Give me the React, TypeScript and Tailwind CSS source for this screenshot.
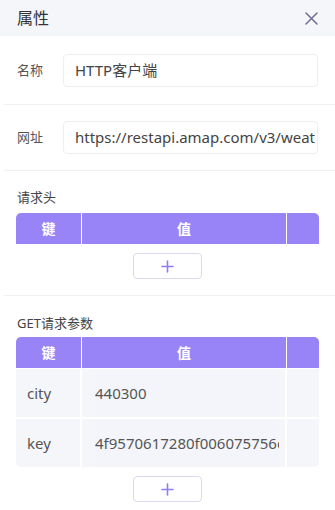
import React from 'react';

const font = { fontFamily: '"Noto Sans", "Noto Sans CJK SC", sans-serif' };

const TableHead = () => (
  <div className="flex h-[31px] rounded-t-[5px] overflow-hidden bg-[#9884f6] text-white text-[14px] font-bold">
    <div className="w-[66px] flex items-center justify-center border-r border-white">键</div>
    <div className="w-[205px] flex items-center justify-center border-r border-white">值</div>
    <div className="flex-1" />
  </div>
);

const AddButton = () => (
  <div className="flex justify-center">
    <button className="w-[69px] h-[26px] rounded-[4px] border border-[#dcd8f0] bg-white flex items-center justify-center">
      <svg width="13" height="13" viewBox="0 0 13 13">
        <path d="M6.5 1v11M1 6.5h11" stroke="#8f7cf3" strokeWidth="1.6" strokeLinecap="round" />
      </svg>
    </button>
  </div>
);

const App = () => {
  const params = [
    { key: 'city', value: '440300' },
    { key: 'key', value: '4f9570617280f006075756c2b3a1' },
  ];

  return (
    <div className="w-[335px] h-[510px] bg-white overflow-hidden text-[#333]" style={font}>
      {/* Header */}
      <div className="h-[36px] bg-[#f5f6fa] flex items-center justify-between pl-[17px] pr-[17px]">
        <span className="text-[16px] text-[#333]">属性</span>
        <svg width="13" height="13" viewBox="0 0 13 13">
          <path d="M1 1l11 11M12 1L1 12" stroke="#6f6d92" strokeWidth="1.5" strokeLinecap="round" />
        </svg>
      </div>

      {/* Name */}
      <div className="flex items-center pl-[17px] pr-[17px] pt-[18px] pb-[17px]">
        <span className="w-[46px] text-[13px] text-[#555]">名称</span>
        <div className="flex-1 h-[33px] border border-[#eceef2] rounded-[4px] flex items-center px-[11px] text-[15px] text-[#444] overflow-hidden whitespace-nowrap">
          HTTP客户端
        </div>
      </div>
      <div className="ml-[4px] h-px bg-[#eef0f4]" />

      {/* URL */}
      <div className="flex items-center pl-[17px] pr-[17px] pt-[16px] pb-[16px]">
        <span className="w-[46px] text-[13px] text-[#555]">网址</span>
        <div className="flex-1 h-[33px] border border-[#eceef2] rounded-[4px] flex items-center pl-[11px] pr-[2px] text-[15px] text-[#444] overflow-hidden whitespace-nowrap">
          <span className="overflow-hidden">https://restapi.amap.com/v3/weather/weatherInfo</span>
        </div>
      </div>
      <div className="ml-[4px] h-px bg-[#eef0f4]" />

      {/* Headers */}
      <div className="pl-[16px] pr-[16px] pt-[17px] pb-[16px]">
        <div className="text-[13px] text-[#444] pl-px h-[18px] leading-[18px] mb-[7px]">请求头</div>
        <TableHead />
        <div className="mt-[9px]">
          <AddButton />
        </div>
      </div>
      <div className="ml-[4px] h-px bg-[#eef0f4]" />

      {/* GET params */}
      <div className="pl-[16px] pr-[16px] pt-[18px]">
        <div className="text-[13px] text-[#444] pl-px h-[18px] leading-[18px] mb-[5px]">GET请求参数</div>
        <TableHead />
        <div className="flex flex-col gap-[2px] mt-px rounded-b-[5px] overflow-hidden">
          {params.map((p) => (
            <div key={p.key} className="flex h-[48px] text-[15px] text-[#555]">
              <div className="w-[66px] bg-[#f5f6fa] border-r-2 border-white flex items-center pl-[11px]">{p.key}</div>
              <div className="w-[205px] bg-[#f5f6fa] border-r-2 border-white flex items-center pl-[13px] pr-[6px]">
                <div className="flex-1 h-full flex items-center overflow-hidden whitespace-nowrap bg-[#f4f5fa]">{p.value}</div>
              </div>
              <div className="flex-1 bg-[#f5f6fa]" />
            </div>
          ))}
        </div>
        <div className="mt-[9px]">
          <AddButton />
        </div>
      </div>
    </div>
  );
};

export default App;
